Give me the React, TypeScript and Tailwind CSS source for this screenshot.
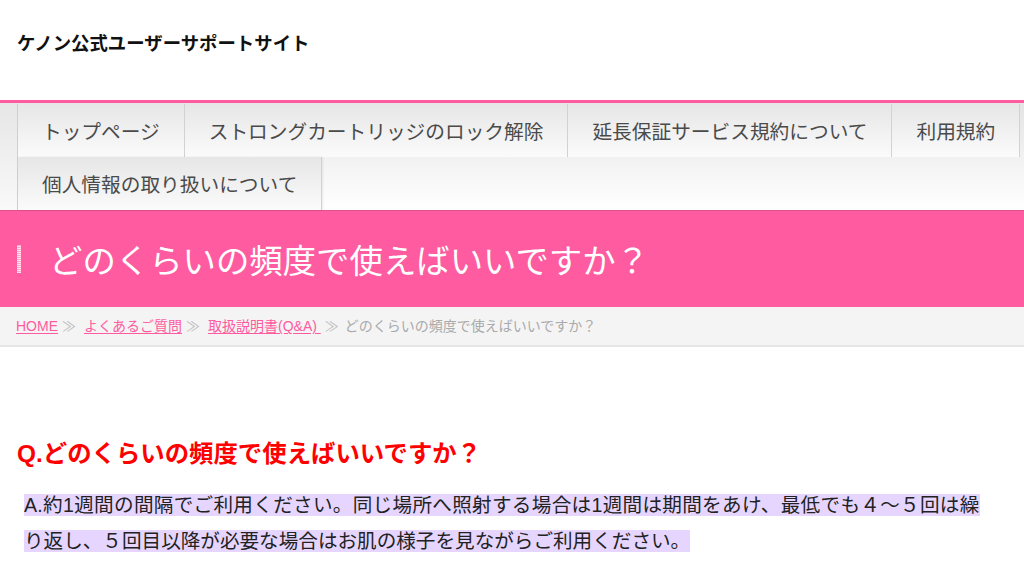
import React from "react"

const navRow1 = [
  "トップページ",
  "ストロングカートリッジのロック解除",
  "延長保証サービス規約について",
  "利用規約",
]

const App = () => {
  return (
    <div className="min-h-screen bg-white font-['Liberation_Sans','Noto_Sans_CJK_JP',sans-serif] text-[#222]">
      {/* header */}
      <div className="h-[100px] px-[17px] pt-[33px]">
        <h1 className="text-[18.4px] font-bold leading-none text-[#111] font-['Noto_Sans_CJK_JP',sans-serif]">
          ケノン公式ユーザーサポートサイト
        </h1>
      </div>

      {/* nav */}
      <div className="border-t-[3px] border-[#ff5ba0] bg-gradient-to-b from-[#e6e6e6] to-[#f9f9f9] pl-[17px] pt-px">
        <ul className="flex flex-wrap border-l border-[#cfcfcf] bg-gradient-to-b from-[#e4e4e4] to-white font-['Noto_Sans_CJK_JP',sans-serif] text-[19.7px] leading-none text-[#4a4a4a]">
          {navRow1.map((item) => (
            <li
              key={item}
              className="flex h-[53px] items-center border-r border-[#d2d2d2] bg-gradient-to-b from-[#e6e6e6] to-[#fbfbfb] px-6"
            >
              {item}
            </li>
          ))}
          <li className="flex h-[53px] items-center border-r border-[#d2d2d2] bg-gradient-to-b from-[#e6e6e6] to-[#fbfbfb] px-6 shadow-[1px_0_2px_rgba(0,0,0,0.08)]">
            個人情報の取り扱いについて
          </li>
        </ul>
      </div>

      {/* title */}
      <div className="flex h-[97px] items-center border-t border-[#e0508f] bg-[#ff5ba0] pl-[17px]">
        <span className="mr-[28px] h-[28px] w-1 bg-[repeating-linear-gradient(0deg,#ffe4f0_0px,#ffe4f0_1px,#ffa9cd_1px,#ffa9cd_2px)]"></span>
        <h2 className="text-[33.4px] leading-none text-white font-['Noto_Sans_CJK_JP',sans-serif]">
          どのくらいの頻度で使えばいいですか？
        </h2>
      </div>

      {/* breadcrumb */}
      <div className="flex h-[40px] items-center border-b-2 border-[#e6e6e6] bg-[#f4f4f4] px-[16px] text-[14px] leading-none text-[#aaa]">
        <a className="text-[#ff5ba0] underline underline-offset-2">HOME</a>
        <span className="mx-[4px] text-[#bbb]">≫</span>
        <a className="ml-[4px] text-[#ff5ba0] underline underline-offset-2">よくあるご質問</a>
        <span className="mx-[4px] text-[#bbb]">≫</span>
        <a className="ml-[4px] text-[#ff5ba0] underline underline-offset-2">取扱説明書(Q&amp;A)&nbsp;</a>
        <span className="mx-[4px] text-[#bbb]">≫</span>
        <span className="ml-[2px]">どのくらいの頻度で使えばいいですか？</span>
      </div>

      {/* content */}
      <div className="px-[17px] pt-[95px]">
        <h3 className="text-[24.4px] font-bold leading-none text-[#ff0000]">
          Q.どのくらいの頻度で使えばいいですか？
        </h3>
        <p className="ml-[7px] mt-[21px] text-[19.6px] leading-[36px] text-[#222]">
          <span className="bg-[#e6d6ff]">
            <span className="tracking-[0.3px]">
              A.約1週間の間隔でご利用ください。同じ場所へ照射する場合は1週間は期間をあけ、最低でも４～５回は繰
            </span>
            <br />
            り返し、５回目以降が必要な場合はお肌の様子を見ながらご利用ください。
          </span>
        </p>
      </div>
    </div>
  )
}

export default App
